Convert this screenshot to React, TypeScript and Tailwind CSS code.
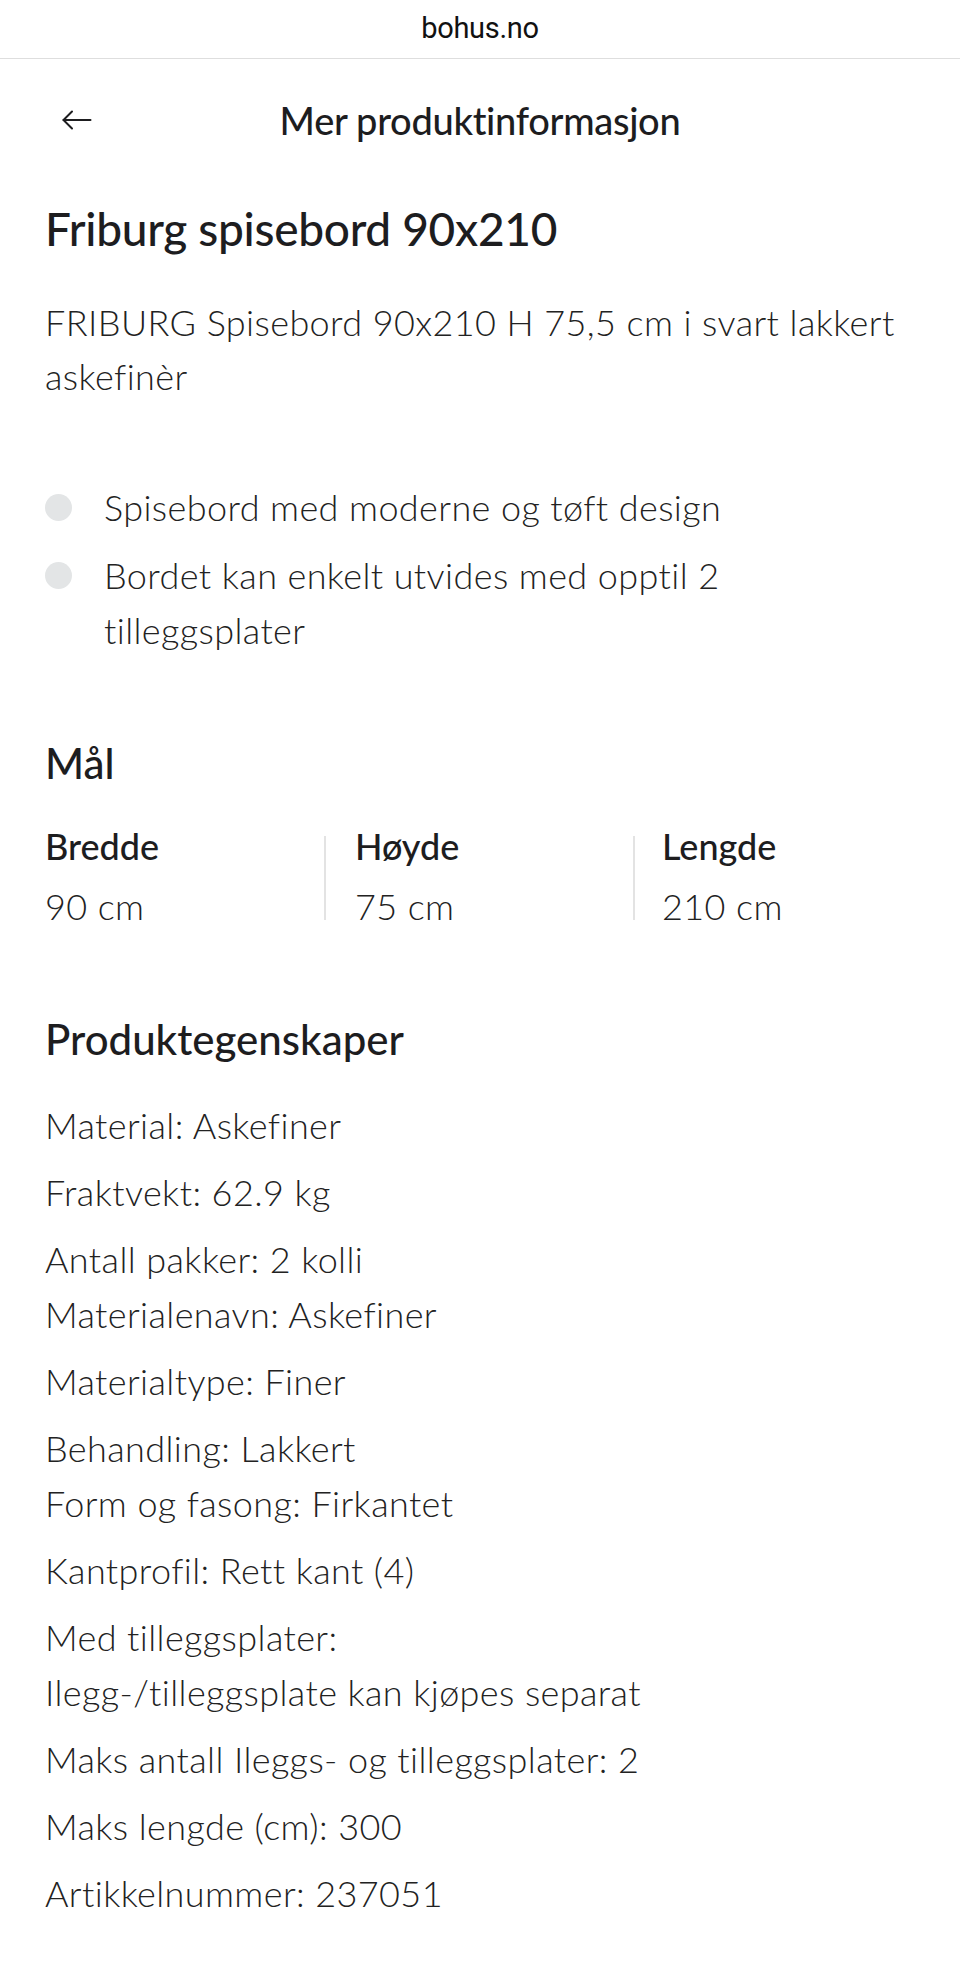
import React from "react";

const bullets = [
  "Spisebord med moderne og tøft design",
  "Bordet kan enkelt utvides med opptil 2 tilleggsplater",
];

const props: string[][] = [
  ["Material: Askefiner"],
  ["Fraktvekt: 62.9 kg"],
  ["Antall pakker: 2 kolli", "Materialenavn: Askefiner"],
  ["Materialtype: Finer"],
  ["Behandling: Lakkert", "Form og fasong: Firkantet"],
  ["Kantprofil: Rett kant (4)"],
  ["Med tilleggsplater:", "Ilegg-/tilleggsplate kan kjøpes separat"],
  ["Maks antall Ileggs- og tilleggsplater: 2"],
  ["Maks lengde (cm): 300"],
  ["Artikkelnummer: 237051"],
];

function Dim({ label, value }: { label: string; value: string }) {
  return (
    <div>
      <div className="text-[36px] font-medium leading-[44px] text-[#1d1d1f]">{label}</div>
      <div className="text-[36px] font-light leading-[44px] mt-[16px] tracking-[0.4px] text-[#222]">{value}</div>
    </div>
  );
}

export default function App() {
  return (
    <div className="w-[960px] min-h-[1962px] bg-white text-[#1d1d1f]" style={{ fontFamily: "Lato, 'Noto Sans', sans-serif" }}>
      <div className="h-[59px] flex items-center justify-center border-b border-[#dedede]">
        <span className="text-[29px] text-[#111] tracking-[-0.3px]" style={{ fontFamily: "Roboto, 'Noto Sans', sans-serif" }}>bohus.no</span>
      </div>
      <div className="relative h-[124px] flex items-center justify-center">
        <svg className="absolute left-[62px] top-[51px]" width="30" height="20" viewBox="0 0 30 20" fill="none" stroke="#1d1d1f" strokeWidth="2" strokeLinecap="round" strokeLinejoin="round">
          <line x1="1.5" y1="10" x2="28.5" y2="10" />
          <polyline points="10,1.5 1.5,10 10,18.5" />
        </svg>
        <h1 className="text-[38px] font-medium leading-[48px] tracking-[-0.3px] mt-[-2px]">Mer produktinformasjon</h1>
      </div>
      <div className="px-[45px]">
        <h2 className="text-[46px] font-medium leading-[56px] tracking-[-0.3px] mt-[18px]">Friburg spisebord 90x210</h2>
        <p className="text-[36px] font-light leading-[54px] mt-[38px] tracking-[0.4px] text-[#222]">
          FRIBURG Spisebord 90x210 H 75,5 cm i svart lakkert askefinèr
        </p>
        <ul className="mt-[77px] flex flex-col gap-[13px]">
          {bullets.map((b) => (
            <li key={b} className="flex items-start">
              <span className="mt-[14px] w-[27px] h-[27px] rounded-full bg-[#e3e5e6] shrink-0" />
              <span className="ml-[32px] max-w-[660px] text-[36px] font-light leading-[55px] tracking-[0.4px] text-[#222]">{b}</span>
            </li>
          ))}
        </ul>
        <h3 className="text-[42px] font-medium mt-[80px] leading-[50px]">Mål</h3>
        <div className="flex mt-[36px]">
          <div className="w-[279px]">
            <Dim label="Bredde" value="90 cm" />
          </div>
          <div className="w-[2px] h-[84px] mt-[12px] bg-[#e3e3e3]" />
          <div className="w-[307px] pl-[29px]">
            <Dim label="Høyde" value="75 cm" />
          </div>
          <div className="w-[2px] h-[84px] mt-[12px] bg-[#e3e3e3]" />
          <div className="pl-[27px]">
            <Dim label="Lengde" value="210 cm" />
          </div>
        </div>
        <h3 className="text-[42px] font-medium mt-[86px] leading-[50px]">Produktegenskaper</h3>
        <div className="mt-[34px] flex flex-col gap-[12px]">
          {props.map((p, i) => (
            <p key={i} className="text-[36px] font-light leading-[55px] tracking-[0.4px] text-[#222]">
              {p.map((line, j) => (
                <span key={j} className="block">{line}</span>
              ))}
            </p>
          ))}
        </div>
      </div>
    </div>
  );
}
